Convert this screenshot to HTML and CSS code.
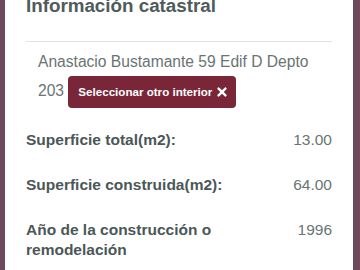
FILE: index.html
```html
<!DOCTYPE html>
<html lang="es">
<head>
    <meta charset="UTF-8">
    <meta name="viewport" content="width=device-width, initial-scale=1.0">
    <title>Información catastral</title>
    <link rel="stylesheet" href="styles.css">
</head>
<body>
    <div class="modal">
        <div class="modal-header">
            <h2 class="modal-title">Información catastral</h2>
        </div>
        <div class="modal-body">
            <p class="address">
                Anastacio Bustamante 59 Edif D Depto 203
                <button class="btn-interior">Seleccionar otro interior<svg class="icon-x" width="10" height="10" viewBox="0 0 10 10"><path d="M1.6 1.6 L8.4 8.4 M8.4 1.6 L1.6 8.4" stroke="#fff" stroke-width="2.4" stroke-linecap="round"/></svg></button>
            </p>
            <div class="info-row">
                <div class="info-label">Superficie total(m2):</div>
                <div class="info-value">13.00</div>
            </div>
            <div class="info-row">
                <div class="info-label">Superficie construida(m2):</div>
                <div class="info-value">64.00</div>
            </div>
            <div class="info-row">
                <div class="info-label">Año de la construcción o remodelación</div>
                <div class="info-value">1996</div>
            </div>
        </div>
    </div>
</body>
</html>
```

FILE: styles.css
```css
body {
    margin: 0;
    background-color: #6f4a5d;
    font-family: "Liberation Sans", Arial, sans-serif;
    overflow: hidden;
}

.modal {
    width: 348px;
    height: 270px;
    margin-left: 5px;
    background-color: #fff;
    overflow: hidden;
}

.modal-header {
    margin: 0 21px;
    padding-bottom: 24px;
    border-bottom: 1px solid #dfe2e4;
}

.modal-title {
    margin: 0;
    position: relative;
    top: -5px;
    height: 17px;
    font-size: 18.8px;
    line-height: 21.6px;
    font-weight: bold;
    color: #505b5b;
}

.modal-body {
    padding: 5px 21px 0 21px;
}

.address {
    margin: 0 0 22px 0;
    padding-left: 12px;
    font-size: 15.6px;
    line-height: 29px;
    color: #6a7474;
}

.btn-interior {
    display: inline-block;
    padding: 6px 9px 6px 10px;
    border: none;
    border-radius: 4px;
    background-color: #7a2639;
    color: #fff;
    font-family: "Liberation Sans", Arial, sans-serif;
    font-size: 11.6px;
    line-height: 20px;
    font-weight: bold;
    cursor: pointer;
}

.icon-x {
    margin-left: 5px;
    vertical-align: -1px;
}

.info-row {
    display: flex;
    align-items: flex-start;
    margin-bottom: 25px;
    font-size: 15.5px;
    line-height: 20px;
}

.info-label {
    flex: 0 0 67%;
    font-weight: bold;
    color: #4b5757;
}

.info-value {
    flex: 1;
    text-align: right;
    color: #6a7474;
}
```
